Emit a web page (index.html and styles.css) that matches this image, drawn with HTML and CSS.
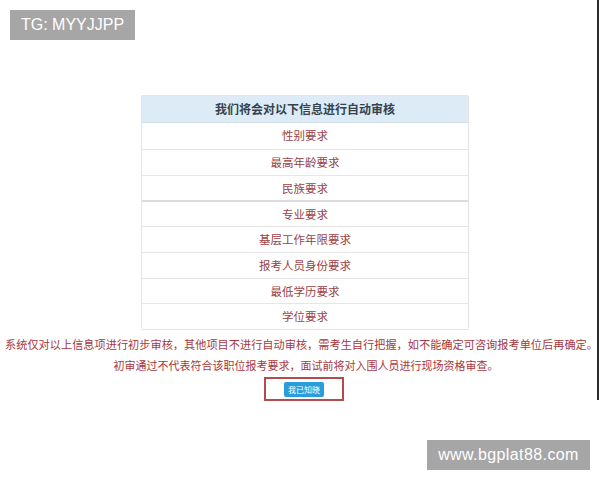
FILE: index.html
```html
<!DOCTYPE html>
<html lang="zh">
<head>
<meta charset="utf-8">
<title>自动审核</title>
<link rel="stylesheet" href="styles.css">
</head>
<body>
<div class="page">
  <div class="panel">
    <div class="panel-head">我们将会对以下信息进行自动审核</div>
    <div class="row">性别要求</div>
    <div class="row">最高年龄要求</div>
    <div class="row">民族要求</div>
    <div class="row row-split">专业要求</div>
    <div class="row">基层工作年限要求</div>
    <div class="row">报考人员身份要求</div>
    <div class="row">最低学历要求</div>
    <div class="row">学位要求</div>
  </div>
  <p class="note note-first">系统仅对以上信息项进行初步审核，其他项目不进行自动审核，需考生自行把握，如不能确定可咨询报考单位后再确定。</p>
  <p class="note note-second">初审通过不代表符合该职位报考要求，面试前将对入围人员进行现场资格审查。</p>
  <div class="confirm-wrap">
    <div class="confirm-box"><span class="btn">我已知晓</span></div>
  </div>
  <div class="edge-line"></div>
  <div class="tag tag-top">TG: MYYJJPP</div>
  <div class="tag tag-bottom">www.bgplat88.com</div>
</div>
</body>
</html>
```
FILE: styles.css
```css
html, body {
  margin: 0;
  padding: 0;
  background: #ffffff;
}
.page {
  position: relative;
  width: 600px;
  height: 480px;
  overflow: hidden;
  padding-top: 95px;
  box-sizing: border-box;
  font-family: "Noto Sans CJK SC", "Liberation Sans", sans-serif;
}
.panel {
  width: 328px;
  margin-left: 141px;
  border: 1px solid #e4e4e4;
  border-top-color: #dde6ee;
  border-radius: 2px;
  box-sizing: border-box;
}
.panel-head {
  height: 26px;
  line-height: 26px;
  background: #dcebf6;
  border-bottom: 1px solid #d3dfe8;
  text-align: center;
  font-size: 12px;
  font-weight: bold;
  color: #36434d;
}
.row {
  height: 25.75px;
  line-height: 25px;
  box-sizing: border-box;
  border-top: 1px solid #e6e6e6;
  text-align: center;
  font-size: 11.5px;
  color: #9a4246;
}
.panel-head + .row {
  border-top: 0;
}
.row-split {
  border-top: 2px solid #dcdcdc;
}
.note {
  margin: 0;
  text-align: center;
  font-size: 11.2px;
  line-height: 21px;
  color: #a8383d;
  white-space: nowrap;
}
.note-first {
  margin-top: 4px;
  padding-left: 3px;
}
.note-second {
  padding-left: 12px;
  font-size: 11px;
}
.confirm-wrap {
  display: flex;
  padding-left: 264px;
  margin-top: 1px;
}
.confirm-box {
  width: 80px;
  height: 24px;
  box-sizing: border-box;
  border: 2px solid #b54a4c;
  display: flex;
  align-items: center;
  justify-content: center;
}
.btn {
  display: flex;
  align-items: center;
  justify-content: center;
  width: 40px;
  height: 15px;
  background: #2a9ddb;
  border-radius: 2px;
  color: #ffffff;
  font-size: 8px;
  line-height: 15px;
}
.edge-line {
  position: absolute;
  right: 1px;
  top: 0;
  width: 2px;
  height: 400px;
  background: #2b2b2b;
}
.tag {
  position: absolute;
  background: #a6a6a6;
  color: #ffffff;
  font-family: "Liberation Sans", Arial, sans-serif;
  font-size: 16px;
  height: 30px;
  line-height: 30px;
  text-align: center;
}
.tag-top {
  left: 10px;
  top: 10px;
  width: 125px;
}
.tag-bottom {
  left: 427px;
  top: 440px;
  width: 163px;
  letter-spacing: 0.4px;
}
```
